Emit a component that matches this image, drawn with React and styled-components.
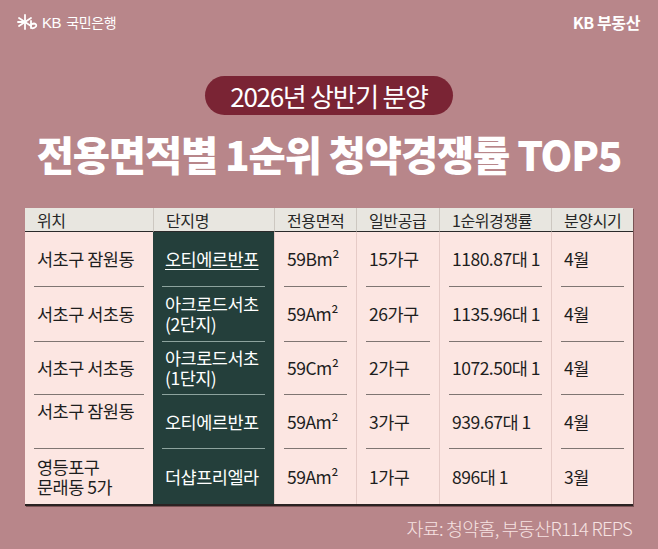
import React from 'react';
import styled, {createGlobalStyle} from 'styled-components';

const GlobalStyle = createGlobalStyle`
    body {
        margin: 0;
        font-family: "Noto Sans CJK KR", "Noto Sans", sans-serif;
    }
`;

const Page = styled.div`
    width: 658px;
    height: 549px;
    background: #b8868a;
    display: flex;
    flex-direction: column;
    align-items: center;
    overflow: hidden;
`;

const TopBar = styled.div`
    width: 100%;
    box-sizing: border-box;
    height: 44px;
    padding: 0 18px 0 17px;
    display: flex;
    align-items: center;
    justify-content: space-between;
    color: #fff;
`;

const BankLogo = styled.div`
    display: flex;
    align-items: center;
    gap: 3px;
    font-size: 14px;
    letter-spacing: -0.4px;
    
    b {
        font-family: "Liberation Sans", sans-serif;
        font-weight: 400;
        font-size: 15px;
        margin-right: 2px;
    }
`;

const BrandRight = styled.div`
    font-size: 16px;
    font-weight: 700;
    letter-spacing: -0.4px;
`;

const Pill = styled.div`
    margin-top: 32px;
    width: 248px;
    height: 39px;
    border-radius: 20px;
    background: #7a2434;
    color: #fff;
    display: flex;
    align-items: center;
    justify-content: center;
    font-size: 26px;
    letter-spacing: -1.3px;
    line-height: 1;
`;

const Title = styled.h1`
    margin: 17px 0 0;
    font-size: 40.5px;
    font-weight: 900;
    color: #fff;
    letter-spacing: -1.2px;
    line-height: 44px;
    white-space: nowrap;
`;

const Table = styled.div`
    margin-top: 32px;
    width: 608px;
    display: grid;
    grid-template-columns: 128px 121px 82px 83px 112px 82px;
    grid-template-rows: 24px 55px 55px 53px 54px 55px;
    background: #fce6e2;
    border-bottom: 2px solid #2b2222;
    box-shadow: 1px 1px 0 rgba(60, 30, 30, 0.5);
`;

const HeadCell = styled.div`
    background: #e8e6e0;
    border-bottom: 1.5px solid #2a2a2a;
    border-left: ${p => p.first ? 'none' : '1px solid #cdc8c1'};
    padding-left: 12px;
    display: flex;
    align-items: center;
    font-size: 16px;
    color: #262626;
    letter-spacing: -0.4px;
    white-space: nowrap;
`;

const Cell = styled.div`
    background: ${p => p.dark ? '#243f3b' : '#fce6e2'};
    border-left: ${p => p.first || p.dark ? 'none' : '1px solid #e6cbc7'};
    padding: 0 9px;
    display: flex;
`;

const CellInner = styled.div`
    flex: 1;
    display: flex;
    align-items: ${p => p.top ? 'flex-start' : 'center'};
    padding: ${p => p.top ? '6px 0 0 3px' : '0 0 0 3px'};
    border-bottom: ${p => p.last ? 'none' : p.dark ? '1.5px solid #8da39e' : '1.5px solid #7f7572'};
    color: ${p => p.dark ? '#fff' : '#1e1e1e'};
    font-size: 17.5px;
    line-height: 20px;
    letter-spacing: -0.5px;
    white-space: pre-line;
    
    u {
        text-decoration-thickness: 1px;
        text-underline-offset: 3px;
    }
`;

const Source = styled.div`
    align-self: flex-end;
    margin: 9px 26px 0 0;
    font-size: 18.5px;
    font-weight: 300;
    color: #f6e2e2;
    letter-spacing: -0.8px;
`;

const KBMark = () => (
    <svg width="22" height="16" viewBox="0 0 22 16">
        <g stroke="#fff" strokeWidth="1.8" strokeLinecap="round" fill="none">
            <line x1="8" y1="1" x2="8" y2="15" />
            <line x1="2" y1="4" x2="14" y2="12" />
            <line x1="2" y1="12" x2="14" y2="4" />
            <line x1="1" y1="8" x2="6" y2="8" />
            <path d="M14 7 L14 14 Q17 15 19 12.5 Q20 10 17 9.5 Q15 9.5 14 11" />
        </g>
    </svg>
);

const headers = ['위치', '단지명', '전용면적', '일반공급', '1순위경쟁률', '분양시기'];

const rows = [
    {loc: '서초구 잠원동', name: '오티에르반포', link: true, area: '59Bm²', supply: '15가구', rate: '1180.87대 1', month: '4월'},
    {loc: '서초구 서초동', name: '아크로드서초\n(2단지)', area: '59Am²', supply: '26가구', rate: '1135.96대 1', month: '4월'},
    {loc: '서초구 서초동', name: '아크로드서초\n(1단지)', area: '59Cm²', supply: '2가구', rate: '1072.50대 1', month: '4월'},
    {loc: '서초구 잠원동', top: true, name: '오티에르반포', area: '59Am²', supply: '3가구', rate: '939.67대 1', month: '4월'},
    {loc: '영등포구\n문래동 5가', name: '더샵프리엘라', area: '59Am²', supply: '1가구', rate: '896대 1', month: '3월'},
];

const App = () => {

    return (
        <Page>
            <GlobalStyle/>
            <TopBar>
                <BankLogo>
                    <KBMark/>
                    <b>KB</b>국민은행
                </BankLogo>
                <BrandRight>KB 부동산</BrandRight>
            </TopBar>

            <Pill>2026년 상반기 분양</Pill>
            <Title>전용면적별 1순위 청약경쟁률 TOP5</Title>

            <Table>
                {headers.map((h, i) => (
                    <HeadCell key={h} first={i === 0}>{h}</HeadCell>
                ))}

                {rows.map((r, i) => {
                    const last = i === rows.length - 1;
                    return (
                        <React.Fragment key={i}>
                            <Cell first>
                                <CellInner last={last} top={r.top}>{r.loc}</CellInner>
                            </Cell>
                            <Cell dark>
                                <CellInner dark last={last}>
                                    {r.link ? <u>{r.name}</u> : r.name}
                                </CellInner>
                            </Cell>
                            <Cell>
                                <CellInner last={last}>{r.area}</CellInner>
                            </Cell>
                            <Cell>
                                <CellInner last={last}>{r.supply}</CellInner>
                            </Cell>
                            <Cell>
                                <CellInner last={last}>{r.rate}</CellInner>
                            </Cell>
                            <Cell>
                                <CellInner last={last}>{r.month}</CellInner>
                            </Cell>
                        </React.Fragment>
                    )
                })}
            </Table>

            <Source>자료: 청약홈, 부동산R114 REPS</Source>
        </Page>
    );
}

export default App;
